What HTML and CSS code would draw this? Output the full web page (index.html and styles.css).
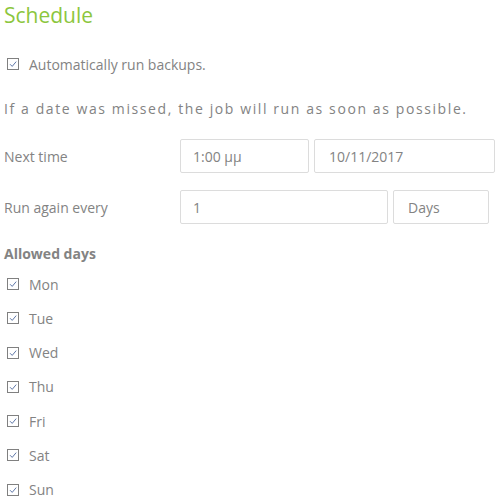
FILE: index.html
```html
<html>

<head>
    <link rel="stylesheet" href="styles.css">
    <title>Schedule</title>
</head>

<body>
    <h1 class="title">Schedule</h1>

    <label class="check auto-run">
        <span class="box"><svg viewBox="0 0 12 12" width="12" height="12"><path d="M3 6.2 L5.2 8.4 L9.2 3.6" /></svg></span>
        Automatically run backups.
    </label>

    <p class="note">If a date was missed, the job will run as soon as possible.</p>

    <div class="form-row">
        <div class="label">Next time</div>
        <div class="field time">1:00 μμ</div>
        <div class="field date">10/11/2017</div>
    </div>
    <div class="form-row">
        <div class="label">Run again every</div>
        <div class="field number">1</div>
        <div class="field unit">Days</div>
    </div>

    <div class="days-title">Allowed days</div>
    <div class="days">
        <label class="check"><span class="box"><svg viewBox="0 0 12 12" width="12" height="12"><path d="M3 6.2 L5.2 8.4 L9.2 3.6" /></svg></span>Mon</label>
        <label class="check"><span class="box"><svg viewBox="0 0 12 12" width="12" height="12"><path d="M3 6.2 L5.2 8.4 L9.2 3.6" /></svg></span>Tue</label>
        <label class="check"><span class="box"><svg viewBox="0 0 12 12" width="12" height="12"><path d="M3 6.2 L5.2 8.4 L9.2 3.6" /></svg></span>Wed</label>
        <label class="check"><span class="box"><svg viewBox="0 0 12 12" width="12" height="12"><path d="M3 6.2 L5.2 8.4 L9.2 3.6" /></svg></span>Thu</label>
        <label class="check"><span class="box"><svg viewBox="0 0 12 12" width="12" height="12"><path d="M3 6.2 L5.2 8.4 L9.2 3.6" /></svg></span>Fri</label>
        <label class="check"><span class="box"><svg viewBox="0 0 12 12" width="12" height="12"><path d="M3 6.2 L5.2 8.4 L9.2 3.6" /></svg></span>Sat</label>
        <label class="check"><span class="box"><svg viewBox="0 0 12 12" width="12" height="12"><path d="M3 6.2 L5.2 8.4 L9.2 3.6" /></svg></span>Sun</label>
    </div>
</body>

</html>
```

FILE: styles.css
```css
body {
    margin: 0;
    padding: 0 4px;
    background-color: #fff;
    color: #838383;
    font-family: "Open Sans", "Noto Sans", sans-serif;
    font-size: 14px;
    overflow: hidden;
}

.title {
    margin: 0;
    padding-top: 1px;
    font-size: 21px;
    font-weight: normal;
    line-height: 28px;
    color: #8cc63e;
}

.check {
    display: flex;
    align-items: center;
    height: 20px;
    padding-left: 3px;
}

.check .box {
    width: 12px;
    height: 12px;
    box-sizing: border-box;
    border: 1px solid #808080;
    margin-right: 10px;
    display: flex;
}

.check .box svg {
    margin: -1px;
}

.check .box path {
    fill: none;
    stroke: #5f77a8;
    stroke-width: 1;
}

.auto-run {
    margin-top: 25px;
}

.note {
    margin: 25px 0 0;
    line-height: 20px;
    letter-spacing: 1.6px;
}

.form-row {
    display: flex;
    align-items: center;
    gap: 5px;
    margin-top: 20px;
}

.form-row + .form-row {
    margin-top: 17px;
}

.form-row .label {
    width: 171px;
}

.field {
    height: 34px;
    box-sizing: border-box;
    border: 1px solid #dcdcdc;
    border-radius: 2px;
    display: flex;
    align-items: center;
    padding-left: 14px;
}

.time {
    width: 129px;
    padding-left: 12px;
}

.date {
    width: 181px;
}

.number {
    width: 208px;
    padding-left: 12px;
}

.unit {
    width: 96px;
}

.days-title {
    margin-top: 20px;
    font-weight: bold;
    line-height: 20px;
}

.days {
    display: flex;
    flex-direction: column;
    gap: 14.3px;
    margin-top: 10px;
}
```
